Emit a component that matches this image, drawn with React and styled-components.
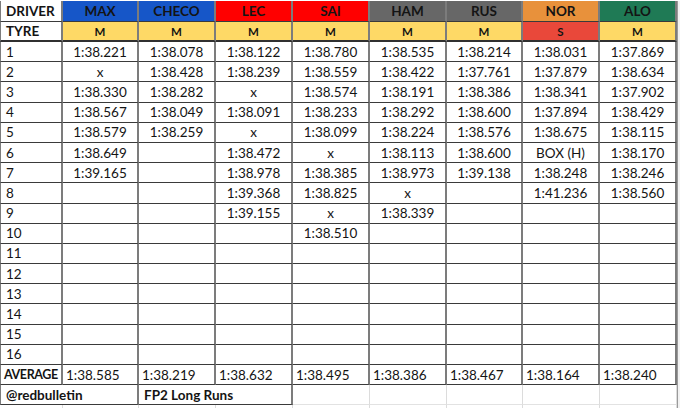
import styled, { createGlobalStyle } from "styled-components";

const GlobalStyle = createGlobalStyle`
  html, body {
    margin: 0;
    padding: 0;
    background: #ffffff;
  }
  body {
    font-family: "Lato", "Liberation Sans", sans-serif;
    color: #141414;
  }
`;

const drivers = [
  { name: "MAX", bg: "#1656c8", tyre: "M" },
  { name: "CHECO", bg: "#1656c8", tyre: "M" },
  { name: "LEC", bg: "#ff0000", tyre: "M" },
  { name: "SAI", bg: "#ff0000", tyre: "M" },
  { name: "HAM", bg: "#676767", tyre: "M" },
  { name: "RUS", bg: "#676767", tyre: "M" },
  { name: "NOR", bg: "#e8913b", tyre: "S" },
  { name: "ALO", bg: "#1f7a55", tyre: "M" },
];

const laps = [
  ["1:38.221", "1:38.078", "1:38.122", "1:38.780", "1:38.535", "1:38.214", "1:38.031", "1:37.869"],
  ["x", "1:38.428", "1:38.239", "1:38.559", "1:38.422", "1:37.761", "1:37.879", "1:38.634"],
  ["1:38.330", "1:38.282", "x", "1:38.574", "1:38.191", "1:38.386", "1:38.341", "1:37.902"],
  ["1:38.567", "1:38.049", "1:38.091", "1:38.233", "1:38.292", "1:38.600", "1:37.894", "1:38.429"],
  ["1:38.579", "1:38.259", "x", "1:38.099", "1:38.224", "1:38.576", "1:38.675", "1:38.115"],
  ["1:38.649", "", "1:38.472", "x", "1:38.113", "1:38.600", "BOX (H)", "1:38.170"],
  ["1:39.165", "", "1:38.978", "1:38.385", "1:38.973", "1:39.138", "1:38.248", "1:38.246"],
  ["", "", "1:39.368", "1:38.825", "x", "", "1:41.236", "1:38.560"],
  ["", "", "1:39.155", "x", "1:38.339", "", "", ""],
  ["", "", "", "1:38.510", "", "", "", ""],
];

const averages = ["1:38.585", "1:38.219", "1:38.632", "1:38.495", "1:38.386", "1:38.467", "1:38.164", "1:38.240"];

const Page = styled.div`
  width: 680px;
  height: 408px;
  overflow: hidden;
  padding-top: 1px;
  box-sizing: border-box;
`;

const Sheet = styled.div`
  display: grid;
  grid-template-columns: 63px 76px 77px 77px 77px 77px 76px 77px 77px 3px;
  grid-template-rows: 21px 20px repeat(16, 20.2px) 20px 20px 6px;
  font-size: 13.5px;
`;

const Cell = styled.div`
  box-sizing: border-box;
  display: flex;
  align-items: center;
  justify-content: ${(p) => (p.$center ? "center" : "flex-start")};
  padding: 0 ${(p) => (p.$pad != null ? p.$pad : 5)}px;
  white-space: nowrap;
  overflow: hidden;
  background: ${(p) => p.$bg || "#ffffff"};
  font-weight: ${(p) => (p.$bold ? 700 : 400)};
  font-size: ${(p) => p.$size || "13.5px"};
  letter-spacing: ${(p) => (p.$tight ? "-0.4px" : "normal")};
  border-right: 2px solid #7c7c7c;
  border-bottom: ${(p) => (p.$thick ? "2px solid #303030" : "1px solid #3a3a3a")};
  border-left: ${(p) => (p.$first ? "1px solid #7c7c7c" : "none")};
  grid-column: ${(p) => (p.$span ? `span ${p.$span}` : "auto")};
`;

const FaintCell = styled.div`
  box-sizing: border-box;
  border-right: 1px solid #dcdcdc;
  border-bottom: 1px solid #e2e2e2;
  background: #ffffff;
`;

const Gutter = styled.div`
  background: #f2f2f2;
  border-left: 1px solid #9a9a9a;
  grid-row: span ${(p) => p.$rows || 1};
`;

export default function App() {
  return (
    <Page>
      <GlobalStyle />
      <Sheet>
        <Cell $first $bold>DRIVER</Cell>
        {drivers.map((d) => (
          <Cell key={d.name} $center $bold $bg={d.bg}>{d.name}</Cell>
        ))}
        <Gutter $rows={21} />

        <Cell $first $bold $thick>TYRE</Cell>
        {drivers.map((d) => (
          <Cell key={d.name} $center $bold $size="11.5px" $thick $bg={d.tyre === "S" ? "#e9483a" : "#fed966"}>
            {d.tyre}
          </Cell>
        ))}

        {Array.from({ length: 16 }, (_, i) => {
          const row = laps[i] || ["", "", "", "", "", "", "", ""];
          return [
            <Cell key={`n${i}`} $first>{i + 1}</Cell>,
            ...row.map((v, j) => (
              <Cell key={`c${i}-${j}`} $center>{v}</Cell>
            )),
          ];
        })}

        <Cell $first $bold $tight $pad={3} $size="12.5px">AVERAGE</Cell>
        {averages.map((v, j) => (
          <Cell key={`a${j}`} $pad={3}>{v}</Cell>
        ))}

        <Cell $first $bold $span={2}>@redbulletin</Cell>
        <Cell $bold $span={2}>FP2 Long Runs</Cell>
        {Array.from({ length: 5 }, (_, j) => (
          <FaintCell key={`f${j}`} />
        ))}
        {Array.from({ length: 9 }, (_, j) => (
          <FaintCell key={`g${j}`} />
        ))}
      </Sheet>
    </Page>
  );
}
